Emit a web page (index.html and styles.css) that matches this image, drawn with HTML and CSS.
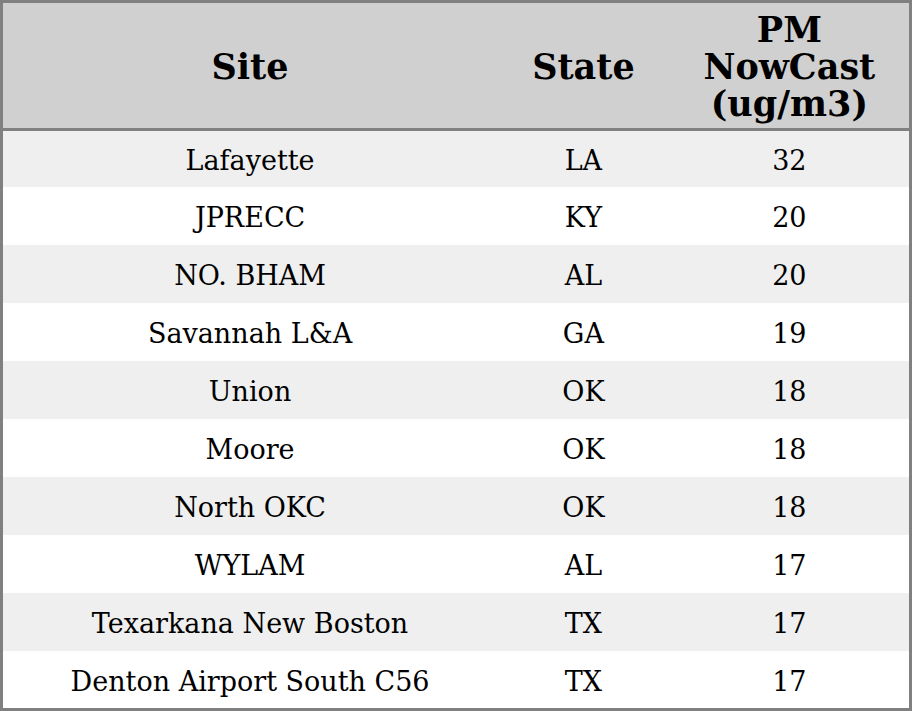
FILE: index.html
```html
<!DOCTYPE html>
<html>
<head>
<meta charset="utf-8">
<link rel="stylesheet" href="styles.css">
</head>
<body>
<table class="aq">
  <colgroup><col class="c-site"><col class="c-state"><col class="c-pm"></colgroup>
  <thead>
    <tr><th>Site</th><th>State</th><th>PM<br>NowCast<br>(ug/m3)</th></tr>
  </thead>
  <tbody>
    <tr class="first"><td>Lafayette</td><td>LA</td><td>32</td></tr>
    <tr><td>JPRECC</td><td>KY</td><td>20</td></tr>
    <tr><td>NO. BHAM</td><td>AL</td><td>20</td></tr>
    <tr><td>Savannah L&amp;A</td><td>GA</td><td>19</td></tr>
    <tr><td>Union</td><td>OK</td><td>18</td></tr>
    <tr><td>Moore</td><td>OK</td><td>18</td></tr>
    <tr><td>North OKC</td><td>OK</td><td>18</td></tr>
    <tr><td>WYLAM</td><td>AL</td><td>17</td></tr>
    <tr><td>Texarkana New Boston</td><td>TX</td><td>17</td></tr>
    <tr class="last"><td>Denton Airport South C56</td><td>TX</td><td>17</td></tr>
  </tbody>
</table>
</body>
</html>
```
FILE: styles.css
```css
html, body { margin: 0; padding: 0; background: #fff; }
.aq {
  border-collapse: collapse;
  width: 912px;
  table-layout: fixed;
  border: 3px solid #808080;
  font-family: "DejaVu Serif", serif;
  color: #000;
}
.c-site { width: 494px; }
.c-state { width: 172px; }
.c-pm { width: 240px; }
.aq th {
  background: #d0d0d0;
  font-size: 35px;
  font-weight: bold;
  line-height: 37px;
  height: 123px;
  padding: 2px 0 0;
  text-align: center;
  vertical-align: middle;
  border-bottom: 3px solid #808080;
}
.aq td {
  font-size: 27px;
  line-height: 30px;
  height: 54px;
  padding: 4px 0 0;
  text-align: center;
  vertical-align: middle;
}
.aq tbody tr:nth-child(odd) { background: #efefef; }
.aq tbody tr.first td { height: 52px; }
.aq tbody tr.last td { height: 53px; }
```
